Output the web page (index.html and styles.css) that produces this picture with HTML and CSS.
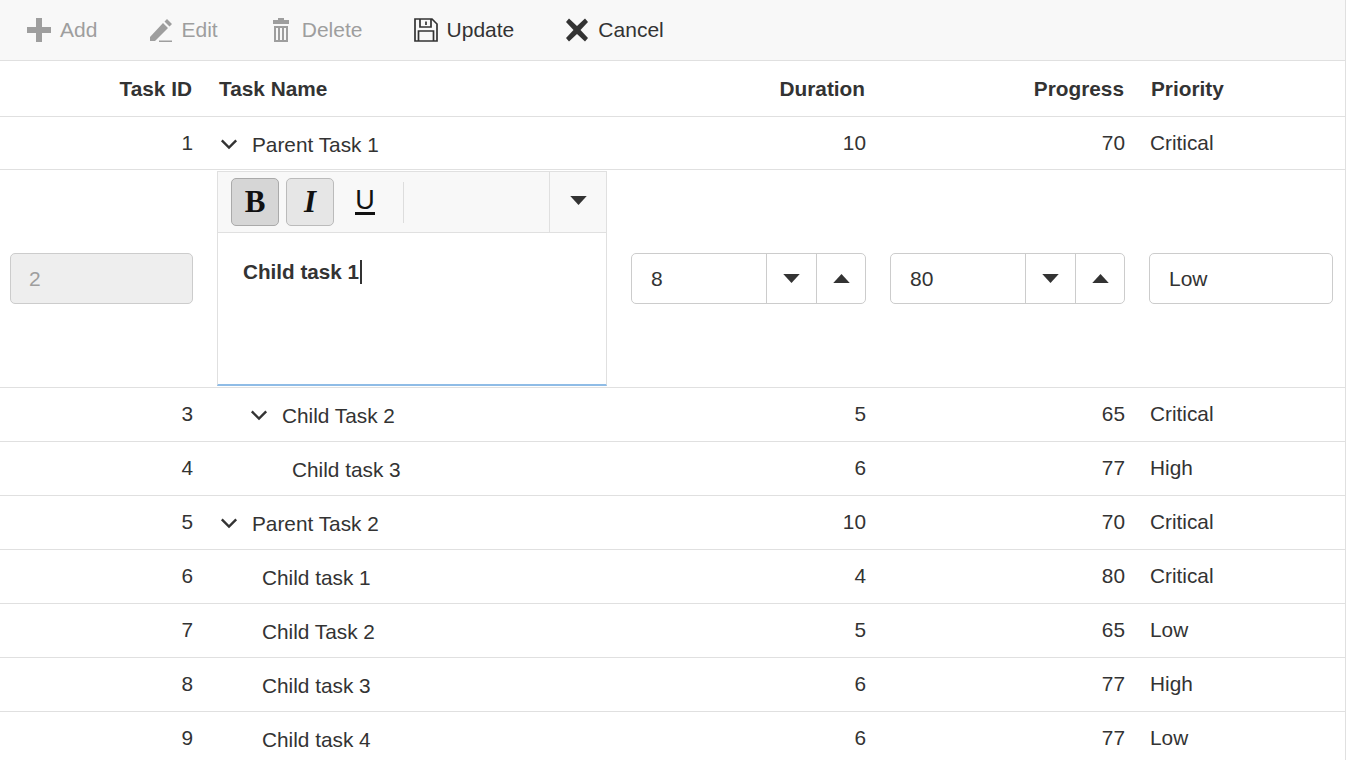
FILE: index.html

```html
<!DOCTYPE html>
<html>
<head>
    <title>Tree Grid Dialog Editing</title>
    <link rel="stylesheet" href="styles.css">
</head>
<body>
    <svg class="icon-defs" width="0" height="0">
        <symbol id="chevron" viewBox="2 2 20 20"><path d="M6 9l6 6 6-6" fill="none" stroke="currentColor" stroke-width="2"/></symbol>
        <symbol id="caret-down" viewBox="0 0 20 12"><path d="M1 1h18l-9 10z" fill="currentColor"/></symbol>
        <symbol id="caret-up" viewBox="0 0 20 12"><path d="M1 11h18l-9-10z" fill="currentColor"/></symbol>
    </svg>

    <div class="toolbar">
        <div class="tool disabled">
            <svg class="tool-icon" viewBox="0 0 24 24"><path d="M9 0h6v9h9v6h-9v9H9v-9H0V9h9z" fill="currentColor"/></svg>
            <span>Add</span>
        </div>
        <div class="tool disabled">
            <svg class="tool-icon" viewBox="0 0 24 24"><path d="M2 19L15 5l5 5L7 23H2zM16.500 3.500L19 1l5 5-2.500 2.500zM11 22.500h13V24H11z" fill="currentColor"/></svg>
            <span>Edit</span>
        </div>
        <div class="tool disabled">
            <svg class="tool-icon" viewBox="0 0 24 24"><path d="M9 0h6v2h5v4H4V2h5zM5 8h14v16H5zM7 10v12h2V10zM11 10v12h2V10zM15 10v12h2V10z" fill="currentColor" fill-rule="evenodd"/></svg>
            <span>Delete</span>
        </div>
        <div class="tool">
            <svg class="tool-icon" viewBox="0 0 24 24"><path d="M1 1h17l5 5v17H1zM6 1v8h11V1M4.500 23V13h15v10M12 3.500v3.500" fill="none" stroke="currentColor" stroke-width="1.700"/></svg>
            <span>Update</span>
        </div>
        <div class="tool">
            <svg class="tool-icon" viewBox="0 0 24 24"><path d="M1 4l3-3.500 8 7.500 8-7.500 3 3.500-7.500 8 7.500 8-3 3.500-8-7.500-8 7.500-3-3.500 7.500-8z" fill="currentColor"/></svg>
            <span>Cancel</span>
        </div>
    </div>

    <table class="grid">
        <colgroup>
            <col class="col-id">
            <col class="col-name">
            <col class="col-num">
            <col class="col-num">
            <col class="col-priority">
        </colgroup>
        <thead>
            <tr>
                <th class="num">Task ID</th>
                <th>Task Name</th>
                <th class="num">Duration</th>
                <th class="num">Progress</th>
                <th>Priority</th>
            </tr>
        </thead>
        <tbody>
            <tr class="first-row">
                <td class="num">1</td>
                <td class="name"><svg class="chevron"><use href="#chevron"/></svg>Parent Task 1</td>
                <td class="num">10</td>
                <td class="num">70</td>
                <td class="text">Critical</td>
            </tr>
            <tr class="edit-row">
                <td><div class="field locked">2</div></td>
                <td>
                    <div class="editor">
                        <div class="editor-bar">
                            <div class="fmt-btn pressed">B</div>
                            <div class="fmt-btn active">I</div>
                            <div class="fmt-btn underline"><span>U</span></div>
                            <div class="bar-sep"></div>
                            <div class="bar-more"><svg class="caret"><use href="#caret-down"/></svg></div>
                        </div>
                        <div class="editor-body"><b>Child task 1</b><span class="cursor"></span></div>
                    </div>
                </td>
                <td>
                    <div class="field spinner">
                        <span class="value">8</span>
                        <div class="spin-btn"><svg class="caret"><use href="#caret-down"/></svg></div>
                        <div class="spin-btn"><svg class="caret"><use href="#caret-up"/></svg></div>
                    </div>
                </td>
                <td>
                    <div class="field spinner">
                        <span class="value">80</span>
                        <div class="spin-btn"><svg class="caret"><use href="#caret-down"/></svg></div>
                        <div class="spin-btn"><svg class="caret"><use href="#caret-up"/></svg></div>
                    </div>
                </td>
                <td><div class="field">Low</div></td>
            </tr>
            <tr>
                <td class="num">3</td>
                <td class="name"><svg class="chevron level-1"><use href="#chevron"/></svg>Child Task 2</td>
                <td class="num">5</td>
                <td class="num">65</td>
                <td class="text">Critical</td>
            </tr>
            <tr>
                <td class="num">4</td>
                <td class="name leaf-2">Child task 3</td>
                <td class="num">6</td>
                <td class="num">77</td>
                <td class="text">High</td>
            </tr>
            <tr>
                <td class="num">5</td>
                <td class="name"><svg class="chevron"><use href="#chevron"/></svg>Parent Task 2</td>
                <td class="num">10</td>
                <td class="num">70</td>
                <td class="text">Critical</td>
            </tr>
            <tr>
                <td class="num">6</td>
                <td class="name leaf-1">Child task 1</td>
                <td class="num">4</td>
                <td class="num">80</td>
                <td class="text">Critical</td>
            </tr>
            <tr>
                <td class="num">7</td>
                <td class="name leaf-1">Child Task 2</td>
                <td class="num">5</td>
                <td class="num">65</td>
                <td class="text">Low</td>
            </tr>
            <tr>
                <td class="num">8</td>
                <td class="name leaf-1">Child task 3</td>
                <td class="num">6</td>
                <td class="num">77</td>
                <td class="text">High</td>
            </tr>
            <tr>
                <td class="num">9</td>
                <td class="name leaf-1">Child task 4</td>
                <td class="num">6</td>
                <td class="num">77</td>
                <td class="text">Low</td>
            </tr>
        </tbody>
    </table>
</body>
</html>
```

FILE: styles.css

```css
html, body {
    height: 100%;
    overflow: hidden;
}
body {
    margin: 0;
    width: 1345px;
    font-family: "Liberation Sans", Arial, sans-serif;
    font-size: 20px;
    color: #333;
    background-color: #fff;
    border-right: 1px solid #e0e0e0;
}
.icon-defs {
    display: block;
    height: 0;
}
.toolbar {
    display: flex;
    align-items: center;
    gap: 51.1px;
    height: 60px;
    padding-left: 27px;
    background-color: #f8f8f8;
    border-bottom: 1px solid #e0e0e0;
}
.tool {
    display: flex;
    align-items: center;
    gap: 9px;
    font-size: 21px;
    color: #333;
}
.tool.disabled {
    color: #9e9e9e;
}
.tool-icon {
    width: 24px;
    height: 24px;
}
.grid {
    width: 1345px;
    table-layout: fixed;
    border-collapse: separate;
    border-spacing: 0;
}
.col-id { width: 205px; }
.col-name { width: 414px; }
.col-num { width: 259px; }
.col-priority { width: 208px; }
.grid th,
.grid td {
    box-sizing: border-box;
    padding: 0 12px;
    border-bottom: 1px solid #e0e0e0;
    text-align: left;
    white-space: nowrap;
}
.grid th {
    height: 56px;
    padding-left: 14px;
    font-size: 20.8px;
    font-weight: bold;
}
.grid th.num {
    padding-right: 13px;
}
.grid td {
    height: 54px;
    font-size: 20.8px;
    padding-bottom: 1px;
}
.grid .num {
    text-align: right;
}
.grid td.text {
    padding-left: 13px;
}
.grid .name {
    padding-top: 2px;
    padding-bottom: 0;
}
.grid .first-row td {
    height: 53px;
}
.grid .first-row .name {
    padding-top: 3px;
}
.chevron {
    width: 24px;
    height: 24px;
    margin-right: 11px;
    vertical-align: -4px;
}
.chevron.level-1 {
    margin-left: 30px;
}
.grid .leaf-1 {
    padding-left: 57px;
}
.grid .leaf-2 {
    padding-left: 87px;
}
.grid .edit-row td {
    height: 218px;
    padding-bottom: 0;
}
.grid .edit-row td:first-child {
    padding-left: 10px;
}
.field {
    box-sizing: border-box;
    display: flex;
    align-items: center;
    height: 51px;
    padding-left: 19px;
    border: 1px solid #ccc;
    border-radius: 5px;
    background-color: #fff;
    font-size: 21px;
}
.field.locked {
    padding-left: 18px;
    background-color: #eee;
    color: #9e9e9e;
}
.field.spinner {
    padding-left: 0;
}
.value {
    flex: 1;
    padding-left: 19px;
}
.spin-btn {
    display: flex;
    align-items: center;
    justify-content: center;
    width: 50px;
    height: 49px;
    border-left: 1px solid #ccc;
    box-sizing: border-box;
}
.spin-btn:last-child {
    width: 49px;
}
.caret {
    width: 19px;
    height: 11px;
}
.editor {
    box-sizing: border-box;
    height: 215px;
    border: 1px solid #e0e0e0;
    border-bottom: 2px solid #8fbce6;
    display: flex;
    flex-direction: column;
}
.editor-bar {
    display: flex;
    align-items: center;
    gap: 7px;
    height: 61px;
    flex-shrink: 0;
    padding-left: 13px;
    background-color: #f8f8f8;
    border-bottom: 1px solid #e0e0e0;
    box-sizing: border-box;
}
.fmt-btn {
    box-sizing: border-box;
    width: 48px;
    height: 48px;
    display: flex;
    align-items: center;
    justify-content: center;
    border: 1px solid transparent;
    border-radius: 5px;
    font-family: "Liberation Serif", serif;
    font-size: 31px;
    font-weight: bold;
    color: #111;
}
.fmt-btn.pressed {
    background-color: #d6d6d6;
    border-color: #aaa;
}
.fmt-btn.active {
    background-color: #e6e6e6;
    border-color: #bbb;
    font-style: italic;
}
.fmt-btn.underline {
    font-family: "Liberation Sans", sans-serif;
    font-size: 27px;
    font-weight: normal;
}
.fmt-btn.underline span {
    line-height: 23px;
    border-bottom: 3px solid #111;
}
.bar-sep {
    width: 1px;
    height: 41px;
    margin-left: 7px;
    background-color: #ddd;
}
.bar-more {
    display: flex;
    align-items: center;
    justify-content: center;
    width: 57px;
    height: 60px;
    padding-bottom: 4px;
    margin-left: auto;
    border-left: 1px solid #e0e0e0;
    box-sizing: border-box;
}
.editor-body {
    display: flex;
    align-items: center;
    height: 24px;
    padding: 27px 0 0 25px;
    font-size: 20.7px;
}
.cursor {
    width: 2px;
    height: 24px;
    margin-left: 1px;
    background-color: #333;
}
```
